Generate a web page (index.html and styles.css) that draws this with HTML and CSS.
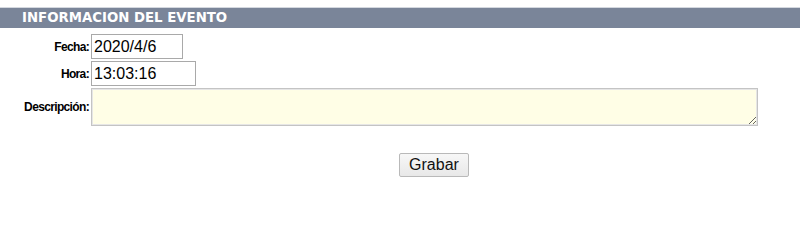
FILE: index.html
```html
<!DOCTYPE html>
<html lang="es">
<head>
<meta charset="utf-8">
<title>Informacion del evento</title>
<link rel="stylesheet" href="styles.css">
</head>
<body>
<div class="header">INFORMACION DEL EVENTO</div>
<form class="form">
  <label class="label" for="fecha">Fecha:</label>
  <div class="field"><input id="fecha" class="input fecha" type="text" value="2020/4/6"></div>
  <label class="label" for="hora">Hora:</label>
  <div class="field"><input id="hora" class="input hora" type="text" value="13:03:16"></div>
  <label class="label" for="desc">Descripción:</label>
  <div class="field"><textarea id="desc" class="textarea"></textarea></div>
</form>
<div class="actions"><button class="button" type="button">Grabar</button></div>
</body>
</html>
```
FILE: styles.css
```css
html, body {
  margin: 0;
  padding: 0;
  background: #ffffff;
}
body {
  padding-top: 7px;
  font-family: "Liberation Sans", Arial, sans-serif;
}
.header {
  border-top: 1px solid #d4d8df;
  background: #7a8599;
  color: #ffffff;
  font-family: "DejaVu Sans", Verdana, sans-serif;
  font-weight: bold;
  font-size: 13.3px;
  height: 20px;
  line-height: 20px;
  padding-left: 22px;
}
.form {
  display: grid;
  grid-template-columns: 91px auto;
  row-gap: 2px;
  align-items: center;
  margin-top: 6px;
}
.label {
  text-align: right;
  font-weight: bold;
  font-size: 12px;
  letter-spacing: -0.65px;
  color: #000;
  padding-right: 2px;
}
.field {
  display: flex;
}
.input {
  box-sizing: border-box;
  height: 25px;
  border: 1px solid #a9a9a9;
  padding: 0 2px;
  font-family: "Liberation Sans", Arial, sans-serif;
  font-size: 16px;
  color: #000;
  outline: none;
}
.fecha { width: 92px; }
.hora { width: 105px; }
.textarea {
  box-sizing: border-box;
  width: 667px;
  height: 38px;
  border: 1px solid #c4c4c4;
  box-shadow: inset 0 0 0 1px #e6e6e6;
  background: #fffee6;
  margin: 0;
  resize: both;
  font-family: "Liberation Sans", Arial, sans-serif;
}
.actions {
  display: flex;
  padding-left: 399px;
  margin-top: 27px;
}
.button {
  box-sizing: border-box;
  width: 70px;
  height: 24px;
  border: 1px solid #b9b9b9;
  border-radius: 2px;
  background: linear-gradient(#f7f7f7, #e8e8e8);
  font-family: "Liberation Sans", Arial, sans-serif;
  font-size: 16px;
  color: #111;
  padding: 0;
}
```
